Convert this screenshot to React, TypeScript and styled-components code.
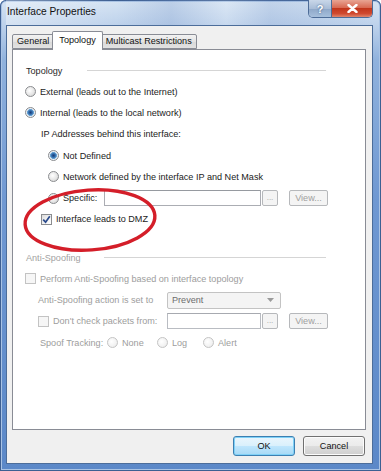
import styled, { createGlobalStyle } from "styled-components";

const GlobalStyle = createGlobalStyle`
  html, body {
    margin: 0;
    padding: 0;
    background: #ffffff;
  }
  body {
    font-family: "Liberation Sans", Arial, sans-serif;
    font-size: 9.1px;
    color: #1b1b1b;
  }
`;

export default function App() {
  return (
    <>
      <GlobalStyle />
      <Frame>
        <TitleBar>
          <TitleText>Interface Properties</TitleText>
          <CaptionButtons>
            <HelpButton>?</HelpButton>
            <CloseButton>
              <svg width="11" height="9" viewBox="0 0 11 9">
                <path
                  d="M1.5 1 L9.5 8 M9.5 1 L1.5 8"
                  stroke="#ffffff"
                  strokeWidth="2.4"
                  strokeLinecap="round"
                />
              </svg>
            </CloseButton>
          </CaptionButtons>
        </TitleBar>

        <Client>
          <TabStrip>
            <Tab>General</Tab>
            <Tab $active>Topology</Tab>
            <Tab>Multicast Restrictions</Tab>
          </TabStrip>

          <Panel>
            <SectionHeader>
              <SectionLabel>Topology</SectionLabel>
              <SectionLine $gap={25} />
            </SectionHeader>

            <Row>
              <Radio />
              <Label>External (leads out to the Internet)</Label>
            </Row>
            <Row>
              <Radio $checked />
              <Label>Internal (leads to the local network)</Label>
            </Row>
            <Row $indent={16}>
              <Label $flush>IP Addresses behind this interface:</Label>
            </Row>
            <Row $indent={23}>
              <Radio $checked />
              <Label>Not Defined</Label>
            </Row>
            <Row $indent={23}>
              <Radio />
              <Label>Network defined by the interface IP and Net Mask</Label>
            </Row>
            <Row $indent={23}>
              <Radio />
              <Label $width={41}>Specific:</Label>
              <TextField $width={157} />
              <EllipsisButton>...</EllipsisButton>
              <ViewButton>View...</ViewButton>
            </Row>
            <Row $indent={16}>
              <CheckBox $checked>
                <svg width="9" height="9" viewBox="0 0 9 9">
                  <path
                    d="M1.2 4.6 L3.6 7.2 L7.8 1.2"
                    fill="none"
                    stroke="#2a4a8c"
                    strokeWidth="1.7"
                  />
                </svg>
              </CheckBox>
              <Label>Interface leads to DMZ</Label>
            </Row>

            <Spacer $h={17} />

            <SectionHeader $disabled>
              <SectionLabel>Anti-Spoofing</SectionLabel>
              <SectionLine $gap={23} />
            </SectionHeader>

            <Row $disabled>
              <CheckBox $disabled />
              <Label>Perform Anti-Spoofing based on interface topology</Label>
            </Row>
            <Row $disabled $indent={13}>
              <Label $flush $width={129}>
                Anti-Spoofing action is set to
              </Label>
              <Select>
                <span>Prevent</span>
                <svg width="7" height="4" viewBox="0 0 7 4">
                  <path d="M0 0 L7 0 L3.5 4 Z" fill="#9a9a9a" />
                </svg>
              </Select>
            </Row>
            <Row $disabled $indent={13}>
              <CheckBox $disabled />
              <Label $width={114}>Don't check packets from:</Label>
              <TextField $width={94} $disabled />
              <EllipsisButton>...</EllipsisButton>
              <ViewButton>View...</ViewButton>
            </Row>
            <Row $disabled $indent={15}>
              <Label $flush $width={67}>
                Spoof Tracking:
              </Label>
              <Radio $disabled />
              <Label $width={35}>None</Label>
              <Radio $disabled />
              <Label $width={31}>Log</Label>
              <Radio $disabled />
              <Label>Alert</Label>
            </Row>

            <Annotation viewBox="0 0 150 80">
              <ellipse
                cx="75"
                cy="40"
                rx="65"
                ry="30"
                fill="none"
                stroke="#d41e29"
                strokeWidth="3.4"
                transform="rotate(-4 75 40)"
              />
            </Annotation>
          </Panel>

          <Footer>
            <DialogButton $default>OK</DialogButton>
            <DialogButton>Cancel</DialogButton>
          </Footer>
        </Client>
      </Frame>
    </>
  );
}

const Frame = styled.div`
  box-sizing: border-box;
  width: 381px;
  height: 471px;
  display: flex;
  flex-direction: column;
  padding: 0 8px 7px 6px;
  border-radius: 6px 6px 0 0;
  background: linear-gradient(
    to bottom,
    #d6e4f3 0px,
    #bfd3ec 24px,
    #90b2dd 60px,
    #6f98d2 200px,
    #5b88c8 100%
  );
  box-shadow: inset 0 0 0 1px #3d5f92, inset 0 0 0 2px #a9c3e4;
`;

const TitleBar = styled.div`
  height: 25px;
  flex: none;
  display: flex;
  justify-content: space-between;
  align-items: flex-start;
  padding-left: 1px;
  background: linear-gradient(
    to right,
    rgba(255, 255, 255, 0.35) 0%,
    rgba(255, 255, 255, 0) 30%,
    rgba(120, 150, 200, 0.25) 45%,
    rgba(255, 255, 255, 0.15) 60%,
    rgba(120, 150, 200, 0.2) 72%,
    rgba(255, 255, 255, 0) 100%
  );
`;

const TitleText = styled.div`
  padding-top: 6px;
  font-size: 10.2px;
  color: #111111;
`;

const CaptionButtons = styled.div`
  display: flex;
  height: 17px;
  border: 1px solid #4d6c98;
  border-top: none;
  border-radius: 0 0 5px 5px;
  overflow: hidden;
`;

const HelpButton = styled.div`
  width: 22px;
  display: flex;
  align-items: center;
  justify-content: center;
  font-family: "Liberation Sans", Arial, sans-serif;
  font-weight: bold;
  font-size: 11px;
  color: #ffffff;
  text-shadow: 0 0 2px #2c4a78;
  border-right: 1px solid #4d6c98;
  background: linear-gradient(to bottom, #c9d7e9 0%, #a9bdd7 50%, #8ea7c8 51%, #a6bfdc 100%);
`;

const CloseButton = styled.div`
  width: 40px;
  display: flex;
  align-items: center;
  justify-content: center;
  background: linear-gradient(to bottom, #e8a493 0%, #d7664f 48%, #c2361c 50%, #d04a30 80%, #e0876e 100%);
`;

const Client = styled.div`
  flex: 1;
  display: flex;
  flex-direction: column;
  padding: 5px 6px 7px 5px;
  background: #f0f0f0;
  border: 1px solid #4c6d9a;
`;

const TabStrip = styled.div`
  display: flex;
  align-items: flex-end;
  height: 19px;
  position: relative;
  z-index: 1;
`;

const Tab = styled.div<{ $active?: boolean }>`
  box-sizing: border-box;
  height: ${(p) => (p.$active ? "19px" : "15px")};
  padding: ${(p) => (p.$active ? "3px 6px 0" : "1px 4px 0")};
  margin: ${(p) => (p.$active ? "0 -2px 0 -2px" : "0 0 1px 0")};
  border: 1px solid #898c95;
  border-bottom: ${(p) => (p.$active ? "none" : "1px solid #898c95")};
  border-radius: 2px 2px 0 0;
  background: ${(p) =>
    p.$active
      ? "#ffffff"
      : "linear-gradient(to bottom, #f2f2f2 0%, #e4e4e4 50%, #d9d9d9 51%, #e2e2e2 100%)"};
  position: relative;
  z-index: ${(p) => (p.$active ? 2 : 1)};
  white-space: nowrap;
  color: #111111;
`;

const Panel = styled.div`
  flex: 1;
  position: relative;
  margin-top: -1px;
  padding: 10px 0 0 12px;
  background: #ffffff;
  border: 1px solid #898c95;
`;

const SectionHeader = styled.div<{ $disabled?: boolean }>`
  display: flex;
  align-items: center;
  width: 300px;
  height: 21px;
  padding-left: 1px;
  color: ${(p) => (p.$disabled ? "#a2a2a2" : "#2a2a2a")};
`;

const SectionLabel = styled.span`
  white-space: nowrap;
`;

const SectionLine = styled.div<{ $gap: number }>`
  flex: 1;
  height: 1px;
  margin-left: ${(p) => p.$gap}px;
  background: #d5d5d5;
`;

const Row = styled.div<{ $indent?: number; $disabled?: boolean }>`
  display: flex;
  align-items: center;
  height: 21.3px;
  padding-left: ${(p) => p.$indent ?? 0}px;
  color: ${(p) => (p.$disabled ? "#9d9d9d" : "#1b1b1b")};
  white-space: nowrap;
`;

const Label = styled.span<{ $flush?: boolean; $width?: number }>`
  margin-left: ${(p) => (p.$flush ? 0 : 4)}px;
  ${(p) => (p.$width ? `width: ${p.$width}px; flex: none;` : "")}
`;

const Spacer = styled.div<{ $h: number }>`
  height: ${(p) => p.$h}px;
`;

const Radio = styled.span<{ $checked?: boolean; $disabled?: boolean }>`
  box-sizing: border-box;
  width: 11px;
  height: 11px;
  flex: none;
  border-radius: 50%;
  border: 1px solid ${(p) => (p.$disabled ? "#c4c4c4" : "#8a8c8f")};
  background: ${(p) =>
    p.$checked
      ? "radial-gradient(circle at 50% 50%, #1b3d78 0, #2f68a8 1.8px, #6aa6d6 3.2px, #e8eef5 3.7px, #f3f3f3 100%)"
      : p.$disabled
      ? "radial-gradient(circle at 40% 40%, #ffffff 0, #f2f2f2 60%, #e2e2e2 100%)"
      : "radial-gradient(circle at 40% 40%, #ffffff 0, #e6e6e6 55%, #c9c9c9 100%)"};
`;

const CheckBox = styled.span<{ $checked?: boolean; $disabled?: boolean }>`
  box-sizing: border-box;
  width: 11px;
  height: 11px;
  flex: none;
  display: flex;
  align-items: center;
  justify-content: center;
  border: 1px solid ${(p) => (p.$disabled ? "#c3c3c3" : "#8a8c8f")};
  background: ${(p) =>
    p.$disabled
      ? "#f6f6f6"
      : "linear-gradient(135deg, #dcdcdc 0%, #f4f4f4 60%, #ffffff 100%)"};
`;

const TextField = styled.div<{ $width: number; $disabled?: boolean }>`
  box-sizing: border-box;
  width: ${(p) => p.$width}px;
  height: 16px;
  flex: none;
  background: #ffffff;
  border: 1px solid ${(p) => (p.$disabled ? "#b9bcc2" : "#abadb3")};
  border-top-color: ${(p) => (p.$disabled ? "#a7aab0" : "#969aa0")};
`;

const EllipsisButton = styled.div`
  box-sizing: border-box;
  width: 16px;
  height: 16px;
  flex: none;
  margin-left: 1px;
  display: flex;
  align-items: flex-end;
  justify-content: center;
  padding-bottom: 3px;
  line-height: 1;
  font-size: 8px;
  color: #a0a0a0;
  border: 1px solid #b6b8bb;
  border-radius: 2px;
  background: #f4f4f4;
`;

const ViewButton = styled.div`
  box-sizing: border-box;
  width: 39px;
  height: 16px;
  flex: none;
  margin-left: 11px;
  display: flex;
  align-items: center;
  justify-content: center;
  color: #a0a0a0;
  border: 1px solid #b6b8bb;
  border-radius: 2px;
  background: #f4f4f4;
`;

const Select = styled.div`
  box-sizing: border-box;
  width: 114px;
  height: 17px;
  flex: none;
  display: flex;
  align-items: center;
  justify-content: space-between;
  padding: 0 6px 0 4px;
  color: #6d6d6d;
  border: 1px solid #c3c3c3;
  border-radius: 2px;
  background: #f4f4f4;
`;

const Annotation = styled.svg`
  position: absolute;
  left: 2px;
  top: 130px;
  width: 150px;
  height: 80px;
  pointer-events: none;
  overflow: visible;
`;

const Footer = styled.div`
  display: flex;
  justify-content: flex-end;
  gap: 8px;
  margin-top: 6px;
  padding-right: 1px;
`;

const DialogButton = styled.div<{ $default?: boolean }>`
  box-sizing: border-box;
  width: 62px;
  height: 20px;
  display: flex;
  align-items: center;
  justify-content: center;
  color: #111111;
  border-radius: 3px;
  border: 1px solid ${(p) => (p.$default ? "#3c7fb1" : "#707070")};
  background: ${(p) =>
    p.$default
      ? "linear-gradient(to bottom, #eaf6fd 0%, #d9f0fc 50%, #bee6fd 51%, #a7d9f5 100%)"
      : "linear-gradient(to bottom, #f2f2f2 0%, #ebebeb 50%, #dddddd 51%, #cfcfcf 100%)"};
  box-shadow: ${(p) =>
    p.$default ? "inset 0 0 0 1px #7fd1f7" : "inset 0 0 0 1px #fcfcfc"};
`;
